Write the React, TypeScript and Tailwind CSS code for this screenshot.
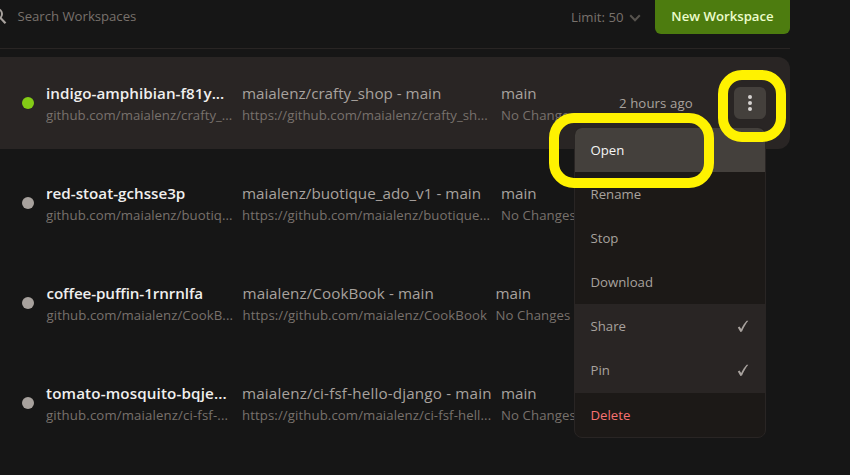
import React from 'react';

type Workspace = {
  name: string;
  url: string;
  project: string;
  context: string;
  nameTrack: string;
  urlTrack: string;
  projectTrack: string;
  contextTrack: string;
  lead: string;
  nameWidth: string;
  projectWidth: string;
  active?: boolean;
};

const workspaces: Workspace[] = [
  {
    name: 'indigo-amphibian-f81y...',
    url: 'github.com/maialenz/crafty_...',
    project: 'maialenz/crafty_shop - main',
    context: 'https://github.com/maialenz/crafty_sh...',
    nameTrack: 'tracking-[0.04px]',
    urlTrack: 'tracking-[0.04px]',
    projectTrack: 'tracking-[0px]',
    contextTrack: 'tracking-[0.03px]',
    lead: 'w-3',
    nameWidth: 'w-[196px]',
    projectWidth: 'w-[259px]',
    active: true,
  },
  {
    name: 'red-stoat-gchsse3p',
    url: 'github.com/maialenz/buotiq...',
    project: 'maialenz/buotique_ado_v1 - main',
    context: 'https://github.com/maialenz/buotique...',
    nameTrack: 'tracking-[0px]',
    urlTrack: 'tracking-[0.06px]',
    projectTrack: 'tracking-[0.03px]',
    contextTrack: 'tracking-[0.07px]',
    lead: 'w-3',
    nameWidth: 'w-[196px]',
    projectWidth: 'w-[259px]',
  },
  {
    name: 'coffee-puffin-1rnrnlfa',
    url: 'github.com/maialenz/CookB...',
    project: 'maialenz/CookBook - main',
    context: 'https://github.com/maialenz/CookBook',
    nameTrack: 'tracking-[-0.1px]',
    urlTrack: 'tracking-[0.08px]',
    projectTrack: 'tracking-[0.08px]',
    contextTrack: 'tracking-[0.08px]',
    lead: 'w-[12.5px]',
    nameWidth: 'w-[196px]',
    projectWidth: 'w-[253px]',
  },
  {
    name: 'tomato-mosquito-bqje...',
    url: 'github.com/maialenz/ci-fsf-...',
    project: 'maialenz/ci-fsf-hello-django - main',
    context: 'https://github.com/maialenz/ci-fsf-hell...',
    nameTrack: 'tracking-[0.13px]',
    urlTrack: 'tracking-[0.14px]',
    projectTrack: 'tracking-[0.17px]',
    contextTrack: 'tracking-[0.1px]',
    lead: 'w-3',
    nameWidth: 'w-[196px]',
    projectWidth: 'w-[259px]',
  },
];

function WorkspaceRow({ ws }: { ws: Workspace }) {
  const small = 'block text-[13.2px] leading-5 text-[#78716c] ';
  const large = 'block text-[15.2px] leading-6 text-[#a8a29e] ';
  return (
    <div className={'flex h-[92px] w-[790px] items-center rounded-r-xl pl-[22px] ' + (ws.active ? 'bg-[#292524]' : '')}>
      <span className={'size-3 shrink-0 rounded-full ' + (ws.active ? 'bg-[#84cc16]' : 'bg-[#a8a29e]')} />
      <span className={'shrink-0 ' + ws.lead} />
      <div className={'shrink-0 whitespace-nowrap ' + ws.nameWidth}>
        <span className={'block text-[15.2px] leading-6 font-semibold text-[#f0efee] ' + ws.nameTrack}>{ws.name}</span>
        <span className={small + ws.urlTrack}>{ws.url}</span>
      </div>
      <div className={'shrink-0 whitespace-nowrap ' + ws.projectWidth}>
        <span className={large + ws.projectTrack}>{ws.project}</span>
        <span className={small + ws.contextTrack}>{ws.context}</span>
      </div>
      <div className="w-[118px] shrink-0 whitespace-nowrap">
        <span className={large}>main</span>
        <span className={small + 'tracking-[0.1px]'}>No Changes</span>
      </div>
      {ws.active && (
        <>
          <span className="w-[115px] shrink-0 pt-[2px] text-[13.2px] tracking-[0.1px] whitespace-nowrap text-[#a8a29e]">2 hours ago</span>
          <button className="flex size-8 flex-col items-center justify-center gap-[2px] rounded-md bg-[#44403c]">
            <i className="size-1 rounded-full bg-[#d6d3d1]" />
            <i className="size-1 rounded-full bg-[#d6d3d1]" />
            <i className="size-1 rounded-full bg-[#d6d3d1]" />
          </button>
        </>
      )}
    </div>
  );
}

function MenuItem({ label, className = '', checked = false }: { label: string; className?: string; checked?: boolean }) {
  return (
    <div className={'flex h-11 items-center justify-between pt-[2px] pr-[16px] pl-[15.500px] text-[13.2px] ' + className}>
      <span>{label}</span>
      {checked && (
        <svg width="12" height="13" viewBox="0 0 12 13" className="mb-[2px]">
          <path d="M.8 7.600 2.500 6.600 4.200 9C5.900 5.400 7.700 2.700 9.700.7L11.300.8C8.900 3.600 6.800 7.500 5 11.600L3.400 12.100Z" fill="#a8a29e" />
        </svg>
      )}
    </div>
  );
}

export default function App() {
  return (
    <div className="relative h-[475px] w-[850px] overflow-hidden bg-[#161616] font-['Open_Sans','Noto_Sans',sans-serif]">
      <header className="flex h-[49px] w-[790px] items-start border-b border-[#292524]">
        <svg width="7" height="30" viewBox="0 0 7 30" className="shrink-0">
          <circle cx="-3" cy="14" r="5" fill="none" stroke="#a8a29e" strokeWidth="2" />
          <path d="M0 17.500 5.500 23.300" stroke="#a8a29e" strokeWidth="2.200" />
        </svg>
        <span className="ml-[10.500px] pt-[6px] text-[13.2px] leading-5 tracking-[-0.03px] text-[#78716c]">Search Workspaces</span>
        <div className="ml-auto flex items-center gap-[5.500px] pt-[7px] text-[13.2px] leading-5 text-[#78716c]">
          <span>Limit: 50</span>
          <svg width="12" height="8" viewBox="0 0 12 8" className="mt-[2px]">
            <path d="M1.200 1.200 6 6.200 10.800 1.200" fill="none" stroke="#57534e" strokeWidth="2" />
          </svg>
        </div>
        <button className="ml-[14px] flex h-[34px] w-[135px] items-center justify-center rounded-b-md bg-[#4d7c0f] text-[13.2px] font-semibold text-[#ecfccb]">
          New Workspace
        </button>
      </header>
      <main className="flex flex-col gap-2 pt-2">
        {workspaces.map((ws) => (
          <WorkspaceRow key={ws.name} ws={ws} />
        ))}
      </main>
      <div className="absolute top-[127px] left-[574px] h-[311px] w-[192px] overflow-hidden rounded-lg border border-[#292524] bg-[#1c1917] text-[#a8a29e]">
        <MenuItem label="Open" className="bg-[#44403c] text-[#f5f5f4]" />
        <MenuItem label="Rename" />
        <MenuItem label="Stop" />
        <MenuItem label="Download" />
        <MenuItem label="Share" className="bg-[#292524]" checked />
        <MenuItem label="Pin" className="bg-[#292524]" checked />
        <div className="h-px bg-[#292524]" />
        <MenuItem label="Delete" className="text-[#f87171]" />
      </div>
      <div className="absolute top-[113px] left-[549px] h-[75px] w-[165px] rounded-[25px] border-[10px] border-[#fff200]" />
      <div className="absolute top-[70px] left-[718px] h-[72px] w-[68px] rounded-[24px] border-[10px] border-[#fff200]" />
    </div>
  );
}
